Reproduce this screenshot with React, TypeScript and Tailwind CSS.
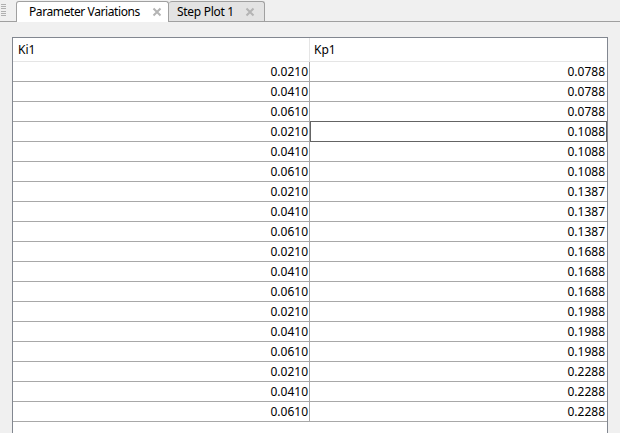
const ki = ['0.0210', '0.0410', '0.0610']
const kp = ['0.0788', '0.1088', '0.1387', '0.1688', '0.1988', '0.2288']

const rows = kp.flatMap((p) => ki.map((i) => ({ ki: i, kp: p })))

function CloseX() {
  return (
    <svg width="10" height="10" viewBox="0 0 10 10" className="ml-auto">
      <path d="M1.5 1.5L8.5 8.5M8.5 1.5L1.5 8.5" stroke="#b4b4b4" strokeWidth="2" />
    </svg>
  )
}

export default function App() {
  return (
    <div
      className="flex h-[433px] w-[620px] flex-col overflow-hidden bg-[#f0f0f0] text-[12px] text-black"
      style={{ fontFamily: '"Noto Sans", "Open Sans", sans-serif' }}
    >
      <div className="flex h-[22px] items-end border-b border-[#a0a0a0]">
        <div className="mb-[5px] ml-[1px] mr-[10px] flex h-[12px] w-[5px] flex-col justify-between">
          {[0, 1, 2, 3, 4, 5].map((k) => (
            <div key={k} className="h-[1px] w-[5px] bg-[#b0b0b0]" />
          ))}
        </div>
        <div className="relative -mb-[1px] flex h-[21px] w-[153px] items-center rounded-t-[3px] border border-b-0 border-[#a0a0a0] bg-white pl-[12px] pr-[6px]">
          <span className="leading-none tracking-[-0.4px]">Parameter Variations</span>
          <CloseX />
        </div>
        <div className="flex h-[20px] w-[96px] items-center rounded-t-[3px] border border-b-0 border-l-0 border-[#a0a0a0] bg-[#e3e3e3] pl-[8px] pr-[9px]">
          <span className="leading-none tracking-[-0.3px]">Step Plot 1</span>
          <CloseX />
        </div>
      </div>

      <div className="flex flex-1 flex-col pl-[12px] pr-[12px] pt-[15px]">
        <div className="flex-1 border-l border-r border-t border-[#828790] bg-white">
          <div className="flex h-[24px] border-b border-[#e5e5e5]">
            <div className="flex w-[297px] items-center border-r border-[#e5e5e5] pl-[5px]">Ki1</div>
            <div className="flex flex-1 items-center pl-[4px]">Kp1</div>
          </div>
          {rows.map((r, idx) => (
            <div key={idx} className="flex h-[20px] border-b border-[#a8a8a8]">
              <div className="flex w-[297px] items-center justify-end border-r border-[#a8a8a8] pr-[1px]">
                {r.ki}
              </div>
              <div
                className={
                  idx === 3
                    ? 'flex flex-1 items-center justify-end border border-[#646464] pr-[1px] -mt-[1px] -mb-[1px]'
                    : 'flex flex-1 items-center justify-end pr-[2px]'
                }
              >
                {r.kp}
              </div>
            </div>
          ))}
        </div>
      </div>
    </div>
  )
}
